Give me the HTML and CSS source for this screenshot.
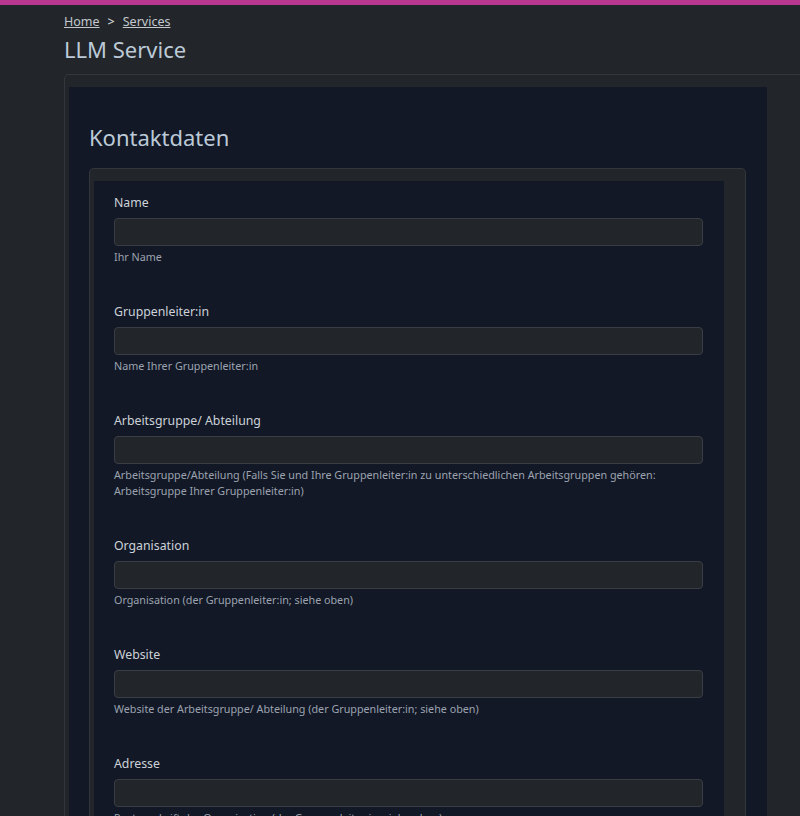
FILE: index.html
```html
<!DOCTYPE html>
<html lang="de">
<head>
<meta charset="utf-8">
<title>LLM Service</title>
<link rel="stylesheet" href="styles.css">
</head>
<body>
<div class="topbar"></div>
<div class="page">
  <nav class="breadcrumb">
    <a href="#">Home</a>
    <span class="sep">&gt;</span>
    <a href="#">Services</a>
  </nav>
  <h1 class="title">LLM Service</h1>
  <div class="card outer">
    <div class="panel outer-panel">
      <h2 class="section-title">Kontaktdaten</h2>
      <div class="card inner">
        <div class="panel inner-panel">
          <div class="field">
            <label class="label">Name</label>
            <div class="input"></div>
            <div class="help">Ihr Name</div>
          </div>
          <div class="field">
            <label class="label">Gruppenleiter:in</label>
            <div class="input"></div>
            <div class="help">Name Ihrer Gruppenleiter:in</div>
          </div>
          <div class="field">
            <label class="label">Arbeitsgruppe/ Abteilung</label>
            <div class="input"></div>
            <div class="help">Arbeitsgruppe/Abteilung (Falls Sie und Ihre Gruppenleiter:in zu unterschiedlichen Arbeitsgruppen gehören: Arbeitsgruppe Ihrer Gruppenleiter:in)</div>
          </div>
          <div class="field">
            <label class="label">Organisation</label>
            <div class="input"></div>
            <div class="help">Organisation (der Gruppenleiter:in; siehe oben)</div>
          </div>
          <div class="field">
            <label class="label">Website</label>
            <div class="input"></div>
            <div class="help">Website der Arbeitsgruppe/ Abteilung (der Gruppenleiter:in; siehe oben)</div>
          </div>
          <div class="field">
            <label class="label">Adresse</label>
            <div class="input"></div>
            <div class="help">Postanschrift der Organisation (der Gruppenleiter:in; siehe oben)</div>
          </div>
        </div>
      </div>
    </div>
  </div>
</div>
</body>
</html>
```
FILE: styles.css
```css
html, body {
  margin: 0;
  padding: 0;
}
body {
  background: #222529;
  font-family: "Noto Sans", "Open Sans", sans-serif;
  color: #d1d5db;
  overflow: hidden;
  height: 816px;
}
.topbar {
  height: 5px;
  background: #b8388f;
}
.page {
  padding-left: 64px;
}
.breadcrumb {
  margin-top: 8px;
  font-size: 12.5px;
  line-height: 18px;
  color: #c2c8ce;
  display: flex;
  gap: 8px;
}
.breadcrumb a {
  color: #c2c8ce;
  text-decoration: underline;
}
.breadcrumb .sep {
  color: #e5e7eb;
}
.title {
  margin: 3px 0 10px 0;
  font-size: 22px;
  line-height: 30px;
  font-weight: 400;
  color: #bccad8;
}
.card {
  border: 1px solid #33363b;
  border-radius: 5px;
  background: #222529;
}
.outer {
  width: 760px;
  padding: 12px 0 0 4px;
  border-bottom: none;
}
.panel {
  background: #121826;
}
.outer-panel {
  width: 678px;
  padding: 35px 0 0 20px;
}
.section-title {
  margin: 0 0 16px 0;
  font-size: 22px;
  line-height: 30px;
  font-weight: 400;
  color: #bccad8;
}
.inner {
  width: 630px;
  padding: 12px 21px 0 4px;
  border-bottom: none;
}
.inner-panel {
  padding: 13px 21px 0 20px;
  display: flex;
  flex-direction: column;
  gap: 38px;
}
.field {
  display: flex;
  flex-direction: column;
}
.label {
  font-size: 12.3px;
  line-height: 18px;
  color: #cdd2d8;
  margin-bottom: 6px;
}
.input {
  height: 26px;
  background: #222529;
  border: 1px solid #3a3e44;
  border-radius: 4px;
}
.help {
  margin-top: 3px;
  font-size: 10.75px;
  line-height: 16px;
  color: #9ca3af;
}
```
